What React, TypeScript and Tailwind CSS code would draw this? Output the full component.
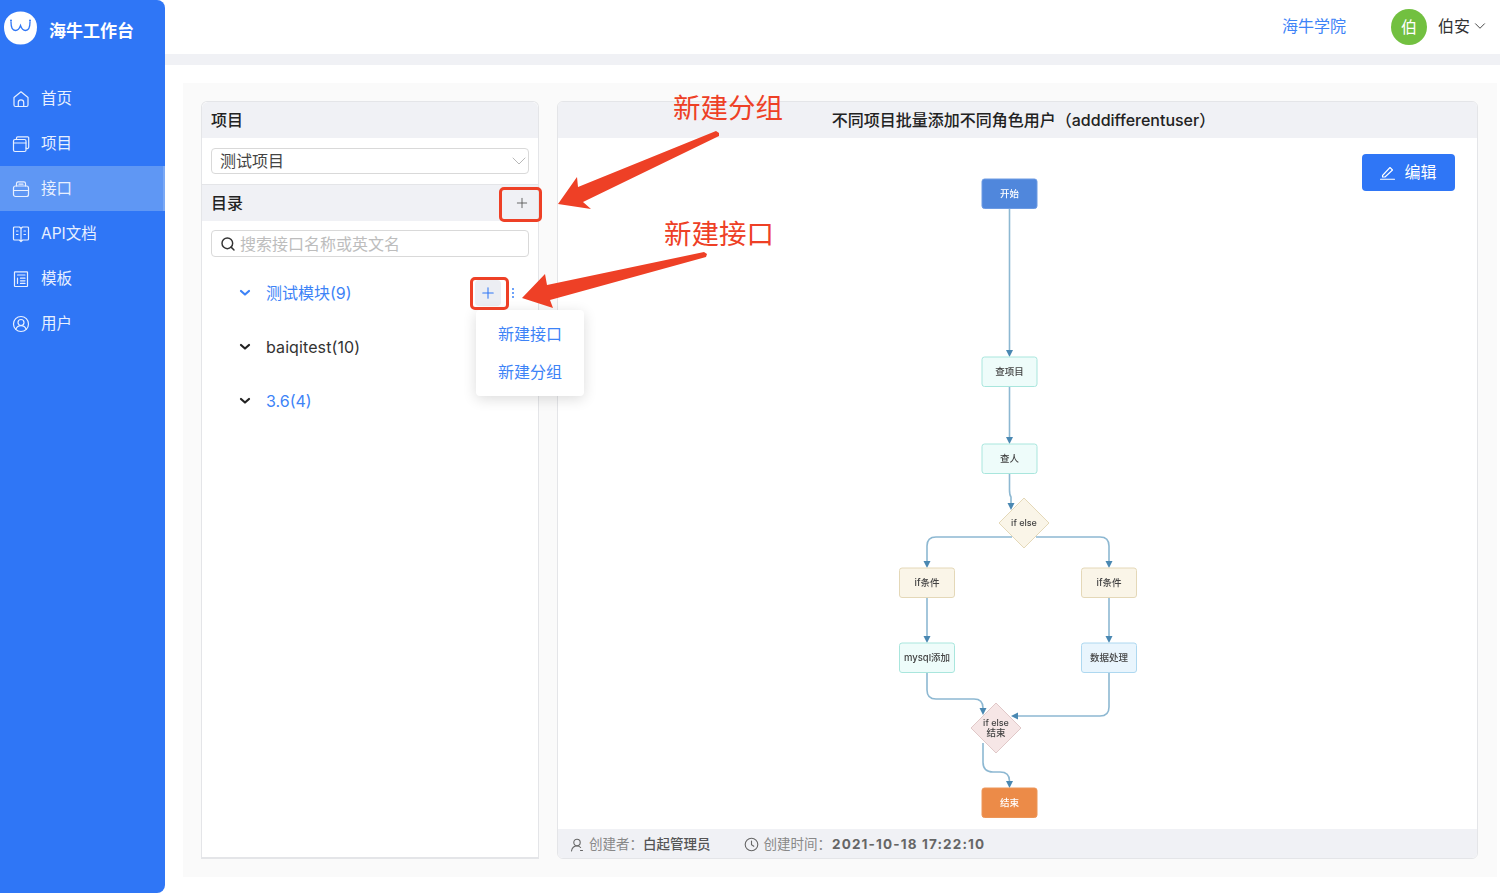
import { ChevronDown, Plus, Search } from "lucide-react";
import type { ReactNode } from "react";

const cjk = "font-['Inter','Noto_Sans_CJK_SC',sans-serif]";

const NavIcon = ({ children }: { children: ReactNode }) => (
  <svg
    width="18"
    height="18"
    viewBox="0 0 18 18"
    fill="none"
    stroke="currentColor"
    strokeWidth="1.2"
    strokeLinejoin="round"
    strokeLinecap="round"
  >
    {children}
  </svg>
);

const navItems: { label: string; active?: boolean; icon: ReactNode }[] = [
  {
    label: "首页",
    icon: (
      <>
        <path d="M2 7.5 9 1.8l7 5.7V15a1.5 1.5 0 0 1-1.5 1.5h-11A1.5 1.5 0 0 1 2 15z" />
        <path d="M6.3 16.5v-4a2.7 2.7 0 0 1 5.4 0v4" />
      </>
    ),
  },
  {
    label: "项目",
    icon: (
      <>
        <rect x="1.5" y="4.5" width="12.5" height="12" rx="1.5" />
        <path d="M1.5 8h12.5M4.5 4.5V3a1.2 1.2 0 0 1 1.2-1.2h10a1 1 0 0 1 1 1V12a1.5 1.5 0 0 1-2.7 1" />
      </>
    ),
  },
  {
    label: "接口",
    active: true,
    icon: (
      <>
        <rect x="1.5" y="6" width="15" height="10.5" rx="2" />
        <path d="M1.5 10.5h15M4.5 6V3.5a1.6 1.6 0 0 1 1.6-1.6h5.8a1.6 1.6 0 0 1 1.6 1.6V6M7 4.2h4" />
      </>
    ),
  },
  {
    label: "API文档",
    icon: (
      <>
        <path d="M9 3.5V16M9 3.5 7.5 2H2.5a1 1 0 0 0-1 1v11a1 1 0 0 0 1 1h4.8L9 16.5l1.7-1.5h4.8a1 1 0 0 0 1-1V3a1 1 0 0 0-1-1h-5z" />
        <path d="M4.5 6h1.5M4.5 9.5h1.5M12 6h1.5M12 9.5h1.5" />
      </>
    ),
  },
  {
    label: "模板",
    icon: (
      <>
        <rect x="2.5" y="1.8" width="13" height="14.7" rx="0.5" />
        <path d="M5.5 5h7.5M8.5 8.2H13M8.5 10.8H13M8.5 13.4H13M5.5 8.2v5.2" />
      </>
    ),
  },
  {
    label: "用户",
    icon: (
      <>
        <circle cx="9" cy="9" r="7.5" />
        <circle cx="9" cy="7.5" r="3" />
        <path d="M3.8 14.2c1-2.4 3-3.6 5.2-3.6s4.2 1.2 5.2 3.6" />
      </>
    ),
  },
];

const Sidebar = () => (
  <aside className="w-[165px] shrink-0 bg-[#2f76f6] rounded-r-lg flex flex-col text-white">
    {/* Logo */}
    <div className="h-[76px] shrink-0 flex items-start pl-1 pt-[11px] gap-3">
      <svg width="33" height="34" viewBox="0 0 33 34">
        <path d="M16.5 0.5C26 0.5 33 7 33 16c0 10-6 17.5-16.5 17.5C6 33.5 0 26 0 16 0 7 7 0.5 16.5 0.5z" fill="#fff" />
        <path d="M7 11c0 6 1.5 8.5 4.5 8.5 2.5 0 4-2 5-5 1 3 2.5 5 5 5 3 0 4.5-2.5 4.5-8.5" fill="none" stroke="#2f76f6" strokeWidth="1.3" strokeLinecap="round" />
        <circle cx="7" cy="9.5" r="1" fill="#2f76f6" />
        <circle cx="26" cy="9.5" r="1" fill="#2f76f6" />
      </svg>
      <span className="text-[17px] font-bold mt-2 leading-[24px]">海牛工作台</span>
    </div>

    {/* Navigation */}
    <nav className="flex flex-col text-[15.5px] text-[#e8f0ff]">
      {navItems.map((item) => (
        <div
          key={item.label}
          className={
            item.active
              ? "h-[45px] flex items-center gap-[11px] pl-3 bg-[#5f97f4] border-r-2 border-[#7aa9f6]"
              : "h-[45px] flex items-center gap-[11px] pl-3"
          }
        >
          <NavIcon>{item.icon}</NavIcon>
          <span>{item.label}</span>
        </div>
      ))}
    </nav>
  </aside>
);

const Header = () => (
  <header className="h-[54px] shrink-0 bg-white flex items-center justify-end pr-[11px] text-base">
    <span className="text-[#3d83f7] mr-[45px] -mt-[2px]">海牛学院</span>
    <div className="w-9 h-9 rounded-full bg-[#72c040] text-white flex items-center justify-center mr-[11px]">伯</div>
    <span className="text-[#333] -mt-[2px]">伯安</span>
    <ChevronDown size={18} className="ml-px text-[#333] -mt-[2px]" strokeWidth={1.2} />
  </header>
);

const TreeChevron = ({ blue }: { blue?: boolean }) => (
  <svg width="12" height="8" viewBox="0 0 12 8" fill="none" stroke={blue ? "#3d83f7" : "#222"} strokeWidth="2.2" strokeLinecap="round" strokeLinejoin="round">
    <path d="M2 2l4 3.5L10 2" />
  </svg>
);

const LeftPanel = () => (
  <section className="w-[338px] shrink-0 h-full bg-white border border-b-2 border-[#e4e5e8] rounded-t-md flex flex-col relative">
    <div className="h-[36px] shrink-0 bg-[#f0f1f5] rounded-t-md flex items-center px-[9px] font-medium text-[#222]">项目</div>
    <div className="h-[46px] shrink-0 px-[9px] pt-[10px]">
      <div className="h-[26px] border border-[#d9d9d9] rounded-sm flex items-center justify-between pl-2 text-[#444]">
        <span>测试项目</span>
        <ChevronDown size={24} strokeWidth={0.7} className="text-[#999] -mr-[3px]" />
      </div>
    </div>
    <div className="h-[37px] shrink-0 bg-[#f0f1f5] border-t border-[#e4e5e8] flex items-center justify-between pl-[9px] pr-2 font-medium text-[#222]">
      <span>目录</span>
      <Plus size={16} strokeWidth={1.3} className="text-[#555]" />
    </div>
    <div className="px-[9px] pt-[9px]">
      <div className="h-[27px] border border-[#d9d9d9] rounded-sm flex items-center gap-1 pl-2 text-[#bdbdbd]">
        <Search size={16} strokeWidth={2.2} className="text-[#333]" />
        <span>搜索接口名称或英文名</span>
      </div>
    </div>
    <div className="pt-[9px] text-[#333]">
      <div className="h-[54px] flex items-center pl-[37px] pr-6">
        <TreeChevron blue />
        <span className="ml-[15px] text-[#3d83f7]">测试模块(9)</span>
        <div className="ml-auto w-[26px] h-[26px] bg-[#eceef3] rounded-sm flex items-center justify-center text-[#2f76f6]">
          <Plus size={18} strokeWidth={1.4} />
        </div>
        <div className="ml-[11px] flex flex-col gap-[2px]">
          <span className="w-[2px] h-[2px] bg-[#3d83f7] rounded-full" />
          <span className="w-[2px] h-[2px] bg-[#3d83f7] rounded-full" />
          <span className="w-[2px] h-[2px] bg-[#3d83f7] rounded-full" />
        </div>
      </div>
      <div className="h-[54px] flex items-center pl-[37px]">
        <TreeChevron />
        <span className="ml-[15px] tracking-[0.1px]">baiqitest(10)</span>
      </div>
      <div className="h-[54px] flex items-center pl-[37px]">
        <TreeChevron />
        <span className="ml-[15px] text-[#3d83f7]">3.6(4)</span>
      </div>
    </div>

    {/* Dropdown menu */}
    <div className="absolute left-[274px] top-[208px] w-[108px] h-[86px] bg-white rounded-sm shadow-[0_3px_14px_rgba(0,0,0,0.14)] flex flex-col justify-center gap-[14px] pl-[22px] text-[#3d83f7] leading-[24px] z-10">
      <span>新建接口</span>
      <span>新建分组</span>
    </div>
  </section>
);

const nodes = [
  { x: 982, y: 179, w: 55, fill: "#5087dc", stroke: "#6d9be3", color: "#fff", text: "开始" },
  { x: 982, y: 357, w: 55, fill: "#eefcfa", stroke: "#a9e6dd", color: "#444", text: "查项目" },
  { x: 982, y: 444, w: 55, fill: "#eefcfa", stroke: "#a9e6dd", color: "#444", text: "查人" },
  { x: 899.5, y: 568, w: 55, fill: "#faf5e8", stroke: "#e4d8b8", color: "#444", text: "if条件" },
  { x: 1081.5, y: 568, w: 55, fill: "#faf5e8", stroke: "#e4d8b8", color: "#444", text: "if条件" },
  { x: 899.5, y: 643, w: 55, fill: "#eefcfa", stroke: "#a9e6dd", color: "#444", text: "mysql添加" },
  { x: 1081.5, y: 643, w: 55, fill: "#e9f5fd", stroke: "#aed8f0", color: "#444", text: "数据处理" },
  { x: 982, y: 788, w: 55, fill: "#ec8b48", stroke: "#ec9659", color: "#fff", text: "结束" },
];

const edges = [
  "M1009.5 208V352",
  "M1009.5 386V439",
  "M1009.5 473V490Q1009.5 495 1011 497V505",
  "M1012 537H936Q927 537 927 546V563",
  "M1036 537H1100Q1109 537 1109 546V563",
  "M927 598V638",
  "M1109 598V638",
  "M927 673V690Q927 699 936 699H974Q983 699 983 708V710",
  "M1109 673V707Q1109 716 1100 716H1016",
  "M983 743V762Q983 772 993 772H1000Q1009.5 772 1009.5 781V783",
];

const arrowHeads = [
  "1006,350 1013,350 1009.5,357",
  "1006,437 1013,437 1009.5,444",
  "1007.5,503 1014.5,503 1011,510",
  "923.5,561 930.5,561 927,568",
  "1105.5,561 1112.5,561 1109,568",
  "923.5,636 930.5,636 927,643",
  "1105.5,636 1112.5,636 1109,643",
  "979.5,708 986.5,708 983,715",
  "1018,712.5 1018,719.5 1011,716",
  "1006,781 1013,781 1009.5,788",
];

const FlowChart = () => (
  <svg
    className="absolute inset-0 w-full h-full blur-[0.3px]"
    viewBox="558 138 919 691"
    fontFamily="Inter, 'Noto Sans CJK SC', sans-serif"
    fontSize="9.5"
    fontWeight="500"
    textAnchor="middle"
  >
    {edges.map((d) => (
      <path key={d} d={d} fill="none" stroke="#8db8d2" strokeWidth="1.6" />
    ))}
    {arrowHeads.map((p) => (
      <polygon key={p} points={p} fill="#4a88b2" />
    ))}
    {nodes.map((n) => (
      <g key={`${n.x}-${n.y}`}>
        <rect x={n.x} y={n.y} width={n.w} height="29.5" rx="2.5" fill={n.fill} stroke={n.stroke} />
        <text x={n.x + n.w / 2} y={n.y + 18} fill={n.color}>
          {n.text}
        </text>
      </g>
    ))}
    <polygon points="1024,498 1049,523 1024,548 999,523" fill="#faf5e8" stroke="#e4d8b8" strokeLinejoin="round" />
    <text x="1024" y="526" fill="#444" fontSize="9">if else</text>
    <polygon points="996,703 1021,728 996,753 971,728" fill="#f6e6e6" stroke="#e0c8c8" strokeLinejoin="round" />
    <text x="996" y="726" fill="#444" fontSize="9">if else</text>
    <text x="996" y="736" fill="#444">结束</text>
  </svg>
);

const RightPanel = () => (
  <section className="flex-1 h-full bg-white border border-[#e4e5e8] rounded-md flex flex-col overflow-hidden">
    <div className="h-[36px] shrink-0 bg-[#f0f1f5] flex items-center justify-center font-medium text-[#222] pl-3">
      不同项目批量添加不同角色用户（adddifferentuser）
    </div>
    <div className="flex-1 relative">
      <FlowChart />
      <div className="absolute right-[22px] top-[16px] w-[93px] h-[37px] bg-[#2f76f6] rounded-sm text-white flex items-center justify-center gap-[9px]">
        <svg width="15" height="15" viewBox="0 0 15 15" fill="none" stroke="currentColor" strokeWidth="1.1" strokeLinejoin="round" strokeLinecap="round">
          <path d="M2.5 10.5 10 2.5l2.5 2.5-7.5 7H2.5zM0.5 14.3h14" />
        </svg>
        <span className="-mt-[2px]">编辑</span>
      </div>
    </div>
    <div className="h-[29px] shrink-0 bg-[#f0f1f5] flex items-center pl-3 pt-[2px] text-[13.5px] text-[#888]">
      <svg width="14" height="14" viewBox="0 0 14 14" fill="none" stroke="currentColor" strokeWidth="1.1" strokeLinecap="round" className="text-[#666]">
        <circle cx="7" cy="4.5" r="3.2" />
        <path d="M1.5 13c.5-3 2.5-5 5.5-5 1.5 0 2.8.5 3.6 1.5M10.5 12.5h2" />
      </svg>
      <span className="ml-[5px]">创建者：</span>
      <span className="text-[#555] font-medium">白起管理员</span>
      <svg width="15" height="15" viewBox="0 0 15 15" fill="none" stroke="currentColor" strokeWidth="1.1" strokeLinecap="round" className="ml-[33px] text-[#666]">
        <circle cx="7.5" cy="7.5" r="6.3" />
        <path d="M7.5 4v3.8l2.3 1.5" />
      </svg>
      <span className="ml-[5px]">创建时间：</span>
      <span className="text-[#666] font-bold tracking-[1.15px] ml-px">2021-10-18 17:22:10</span>
    </div>
  </section>
);

// Red call-outs drawn on top of the screenshot
const Annotations = () => (
  <div className="absolute inset-0 pointer-events-none z-20">
    <div className="absolute left-[499px] top-[187px] w-[43px] h-[35px] border-[3px] border-[#ee4026] rounded-[5px]" />
    <div className="absolute left-[470px] top-[277px] w-[39px] h-[33px] border-[3px] border-[#ee4026] rounded-[5px]" />
    <svg className="absolute inset-0 w-full h-full" viewBox="0 0 1500 893" fill="#ee4026">
      <polygon points="558,204 577,177 578,187 716,131 719,133 719,136 583,202 591,209" />
      <polygon points="522,298 545,274 547,285 704,252 707,254 706,257 550,300 553,308" />
    </svg>
    <span className="absolute left-[673px] top-[90px] text-[27.5px] leading-[36px] text-[#ee4026]">新建分组</span>
    <span className="absolute left-[664px] top-[216px] text-[27.5px] leading-[36px] text-[#ee4026]">新建接口</span>
  </div>
);

const App = () => (
  <div className={`relative w-[1500px] h-[893px] flex overflow-hidden bg-white text-base ${cjk}`}>
    <Sidebar />
    <div className="flex-1 flex flex-col min-w-0">
      <Header />
      <div className="h-[11px] shrink-0 bg-[#f0f1f5]" />
      <main className="flex-1 pt-[18px] pb-4 pl-[18px] pr-[3px] min-h-0">
        <div className="h-full bg-[#fafafa] pt-[18px] pb-[18px] pl-[18px] pr-[19px] flex gap-[18px]">
          <LeftPanel />
          <RightPanel />
        </div>
      </main>
    </div>
    <Annotations />
  </div>
);

export default App;
